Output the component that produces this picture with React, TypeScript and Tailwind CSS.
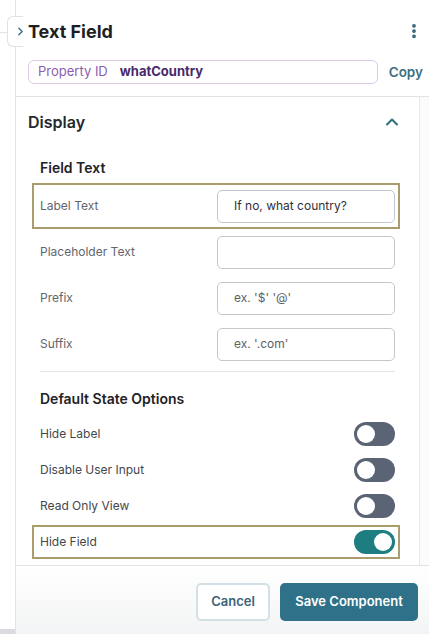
import { ChevronRight, ChevronUp, EllipsisVertical } from "lucide-react";

const font = { fontFamily: "Inter, 'Liberation Sans', sans-serif" };

function FieldRow(props: {
  label: string;
  value?: string;
  placeholder?: string;
  highlight?: boolean;
}) {
  return (
    <div
      className={`flex h-[46px] items-center justify-between border-2 pl-[6px] pr-[3px] ${
        props.highlight ? "border-[#aa9c6c]" : "border-transparent"
      }`}
    >
      <span className="text-[12px] text-[#62666b]">{props.label}</span>
      <div className="flex h-[33px] w-[178px] items-center rounded-[5px] border border-[#c3c7cc] bg-white px-4 text-[12px]">
        {props.value ? (
          <span className="text-[#2f3237]">{props.value}</span>
        ) : (
          <span className="text-[#5d6166]">{props.placeholder}</span>
        )}
      </div>
    </div>
  );
}

function ToggleRow(props: { label: string; on?: boolean; highlight?: boolean }) {
  return (
    <div
      className={`flex h-[34px] items-center justify-between border-2 pl-[6px] pr-[3px] ${
        props.highlight ? "border-[#aa9c6c]" : "border-transparent"
      }`}
    >
      <span className="text-[12px] text-[#44474c]">{props.label}</span>
      <div
        className={`flex h-[24px] w-[41px] items-center rounded-full p-[3px] ${
          props.on ? "justify-end bg-[#1d7d80]" : "justify-start bg-[#5b6474]"
        }`}
      >
        <div className="size-[18px] rounded-full bg-white" />
      </div>
    </div>
  );
}

export default function App() {
  return (
    <div className="relative flex h-[634px] w-[429px] overflow-hidden bg-white" style={font}>
      {/* left gutter */}
      <div className="relative w-[15px] shrink-0">
        <div className="absolute left-0 top-[32px] h-px w-[8px] bg-[#e1e3e6]" />
        <div className="absolute bottom-0 left-0 h-[5px] w-full bg-[#d9dbde]" />
      </div>

      {/* collapse tab */}
      <div className="absolute left-[7px] top-[16px] z-10 flex h-[31px] w-[16px] items-center justify-end rounded-l-[6px] border border-r-0 border-[#dfe2e5] bg-white">
        <ChevronRight className="-mr-[4px] size-[13px] text-[#2e6f80]" strokeWidth={2.5} />
      </div>

      <div className="flex min-w-0 flex-1 flex-col border-l border-[#e1e3e6]">
        {/* header */}
        <div className="h-[97px] shrink-0 border-b border-[#e1e3e6] pl-[12px] pr-[6px]">
          <div className="flex h-[60px] items-center justify-between pt-[2px]">
            <h1 className="text-[18px] font-bold text-[#1d1f23]">Text Field</h1>
            <EllipsisVertical className="size-[18px] text-[#2e5f70]" strokeWidth={3} />
          </div>
          <div className="flex items-center justify-between">
            <div className="flex h-[24px] w-[350px] items-center gap-[12px] rounded-[6px] border border-[#dcc9ec] px-[9px] text-[13px]">
              <span className="text-[#8a5eae]">Property ID</span>
              <span className="font-bold text-[#48296c]">whatCountry</span>
            </div>
            <span className="text-[13.5px] font-semibold text-[#3b6f80]">Copy</span>
          </div>
        </div>

        {/* scroll area */}
        <div className="flex min-h-0 flex-1">
          <div className="w-[404px] shrink-0 border-r border-[#e6e8ea] pl-[16px] pr-[19px]">
            <div className="-ml-[4px] flex h-[49px] items-center justify-between">
              <h2 className="text-[16px] font-semibold text-[#24272b]">Display</h2>
              <ChevronUp className="mr-[-2px] size-[20px] text-[#2e6f80]" strokeWidth={2.5} />
            </div>
            <div className="pb-[5px] pl-[8px] pt-[12px]">
              <h3 className="text-[14px] font-semibold leading-[20px] text-[#1f2226]">Field Text</h3>
            </div>
            <FieldRow label="Label Text" value="If no, what country?" highlight />
            <FieldRow label="Placeholder Text" />
            <FieldRow label="Prefix" placeholder="ex. '$' '@'" />
            <FieldRow label="Suffix" placeholder="ex. '.com'" />
            <div className="ml-[8px] mr-[5px] mt-[4px] border-t border-[#e3e5e8]" />
            <div className="pb-[8px] pl-[8px] pt-[17px]">
              <h3 className="text-[14px] font-semibold leading-[20px] text-[#1f2226]">
                Default State Options
              </h3>
            </div>
            <ToggleRow label="Hide Label" />
            <div className="h-[2px]" />
            <ToggleRow label="Disable User Input" />
            <div className="h-[2px]" />
            <ToggleRow label="Read Only View" />
            <div className="h-[2px]" />
            <ToggleRow label="Hide Field" on highlight />
          </div>
          <div className="flex-1 bg-[#fbfbfb]" />
        </div>

        {/* footer */}
        <div className="flex h-[69px] shrink-0 items-start justify-end gap-[10px] border-t border-[#e1e3e6] bg-gradient-to-b from-white to-[#f3f4f5] pr-[11px] pt-[17px]">
          <button className="h-[38px] w-[74px] rounded-[5px] border-2 border-[#d3e0e5] bg-white text-[13px] font-semibold text-[#3c6279]">
            Cancel
          </button>
          <button className="h-[38px] w-[138px] rounded-[5px] bg-[#2f7188] text-[13px] font-semibold text-white">
            Save Component
          </button>
        </div>
      </div>
    </div>
  );
}
